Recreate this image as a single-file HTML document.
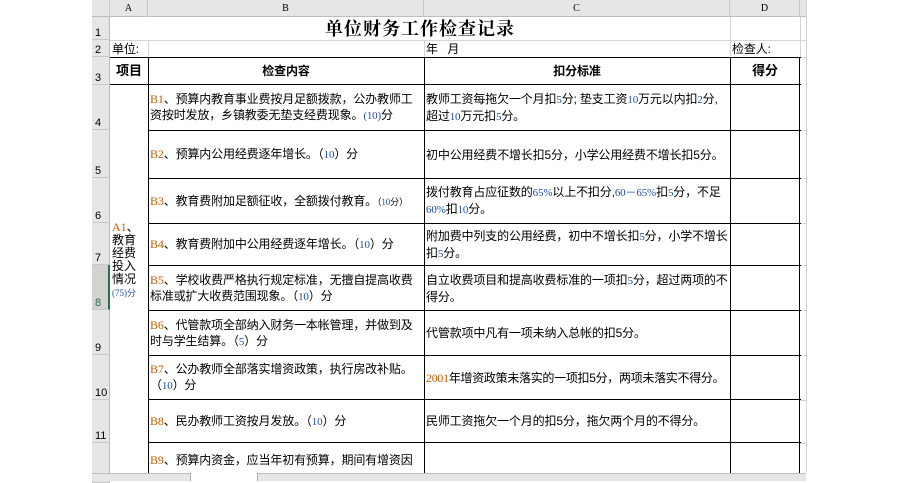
<!DOCTYPE html>
<html><head><meta charset="utf-8"><style>
*{margin:0;padding:0;box-sizing:border-box}
body{width:900px;height:481px;background:#fff;position:relative;overflow:hidden;font-family:"Liberation Serif","Noto Sans CJK SC",serif;font-size:12px;color:#000}
.a{position:absolute}
.ch{position:absolute;top:0;height:17px;line-height:17px;text-align:center;border-right:1px solid #c8c8c8;border-bottom:1px solid #bdbdbd;background:#e6e6e6;font-size:10px;font-family:"Liberation Serif",serif}
.rh{position:absolute;left:92px;width:18px;border-bottom:1px solid #c8c8c8;background:#e6e6e6;font-size:11px;font-family:"Liberation Sans",sans-serif;padding-left:3px;display:flex;align-items:flex-end;border-right:1px solid #bdbdbd}
.c{position:absolute;display:flex;align-items:center;padding:0 2px;line-height:16px;font-family:"Liberation Sans","Noto Sans CJK SC",sans-serif;font-size:12px;letter-spacing:-0.15px}
.b{color:#c06000;font-family:"Liberation Serif",serif}
.n{color:#1f4fa0;font-family:"Liberation Serif",serif;font-size:11px}
.ln{position:absolute;background:#000}
.gl{position:absolute;background:#d4d4d4}
</style></head><body>
<div class="ch" style="left:92px;width:18px"></div>
<div class="ch" style="left:110px;width:38px">A</div>
<div class="ch" style="left:148px;width:276px">B</div>
<div class="ch" style="left:424px;width:306px">C</div>
<div class="ch" style="left:730px;width:70px">D</div>
<div class="ch" style="left:800px;width:6px;border-right:none"></div>
<div class="rh" style="top:17px;height:23px">1</div>
<div class="rh" style="top:40px;height:17px">2</div>
<div class="rh" style="top:57px;height:28px">3</div>
<div class="rh" style="top:85px;height:45px">4</div>
<div class="rh" style="top:130px;height:48px">5</div>
<div class="rh" style="top:178px;height:45px">6</div>
<div class="rh" style="top:223px;height:42px">7</div>
<div class="rh" style="top:265px;height:45px;background:#d2d2d2;border-right:2px solid #217346;color:#217346">8</div>
<div class="rh" style="top:310px;height:45px">9</div>
<div class="rh" style="top:355px;height:45px">10</div>
<div class="rh" style="top:400px;height:43px">11</div>
<div class="rh" style="top:443px;height:40px"></div>
<div class="gl" style="left:110px;top:40px;width:696px;height:1px"></div>
<div class="gl" style="left:110px;top:57px;width:696px;height:1px"></div>
<div class="gl" style="left:730px;top:17px;width:1px;height:40px"></div>
<div class="gl" style="left:800px;top:17px;width:1px;height:40px"></div>
<div class="gl" style="left:424px;top:40px;width:1px;height:17px"></div>
<div class="gl" style="left:148px;top:40px;width:1px;height:17px"></div>
<div class="gl" style="left:800px;top:130px;width:6px;height:1px"></div>
<div class="gl" style="left:800px;top:178px;width:6px;height:1px"></div>
<div class="gl" style="left:800px;top:223px;width:6px;height:1px"></div>
<div class="gl" style="left:800px;top:265px;width:6px;height:1px"></div>
<div class="gl" style="left:800px;top:310px;width:6px;height:1px"></div>
<div class="gl" style="left:800px;top:355px;width:6px;height:1px"></div>
<div class="gl" style="left:800px;top:400px;width:6px;height:1px"></div>
<div class="gl" style="left:800px;top:443px;width:6px;height:1px"></div>
<div class="gl" style="left:806px;top:0;width:1px;height:473px"></div>
<div class="a" style="left:110px;top:17px;width:620px;height:23px;text-align:center;font-family:'Liberation Serif','Noto Serif CJK SC',serif;font-weight:bold;font-size:18px;line-height:24px;letter-spacing:1px">单位财务工作检查记录</div>
<div class="c" style="left:110px;top:40px;height:17px">单位:</div>
<div class="c" style="left:424px;top:40px;height:17px">年&nbsp;&nbsp;&nbsp;月</div>
<div class="c" style="left:730px;top:40px;height:17px">检查人:</div>
<div class="ln" style="left:110px;top:57px;width:691px;height:1px"></div>
<div class="ln" style="left:110px;top:84px;width:691px;height:1px"></div>
<div class="ln" style="left:148px;top:130px;width:653px;height:1px"></div>
<div class="ln" style="left:148px;top:178px;width:653px;height:1px"></div>
<div class="ln" style="left:148px;top:223px;width:653px;height:1px"></div>
<div class="ln" style="left:148px;top:265px;width:653px;height:1px"></div>
<div class="ln" style="left:148px;top:310px;width:653px;height:1px"></div>
<div class="ln" style="left:148px;top:355px;width:653px;height:1px"></div>
<div class="ln" style="left:148px;top:399px;width:653px;height:1px"></div>
<div class="ln" style="left:148px;top:442px;width:653px;height:1px"></div>
<div class="ln" style="left:148px;top:57px;width:1px;height:420px"></div>
<div class="ln" style="left:424px;top:57px;width:1px;height:420px"></div>
<div class="ln" style="left:730px;top:57px;width:1px;height:420px"></div>
<div class="ln" style="left:799px;top:57px;width:1px;height:420px"></div>
<div class="c" style="left:110px;top:58px;width:38px;height:26px;justify-content:center;font-weight:bold;font-size:13px">项目</div>
<div class="c" style="left:148px;top:58px;width:276px;height:26px;justify-content:center;font-weight:bold">检查内容</div>
<div class="c" style="left:424px;top:58px;width:306px;height:26px;justify-content:center;font-weight:bold">扣分标准</div>
<div class="c" style="left:730px;top:58px;width:70px;height:26px;justify-content:center;font-weight:bold;font-size:13px">得分</div>
<div class="a" style="left:112px;top:221px;width:36px;font-family:'Liberation Sans','Noto Sans CJK SC',sans-serif;font-size:12px;line-height:13px"><span class="b">A1</span>、<br>教育<br>经费<br>投入<br>情况<br><span class="n" style="font-size:9px">(75)分</span></div>
<div class="c" style="left:148px;top:85px;width:276px;height:45px"><div><span class="b">B1</span>、预算内教育事业费按月足额拨款，公办教师工资按时发放，乡镇教委无垫支经费现象。<span class="n">(10)</span>分</div></div>
<div class="c" style="left:148px;top:131px;width:276px;height:47px"><div><span class="b">B2</span>、预算内公用经费逐年增长。（<span class="n">10</span>）分</div></div>
<div class="c" style="left:148px;top:179px;width:276px;height:44px"><div><span class="b">B3</span>、教育费附加足额征收，全额拨付教育。<span style="font-size:9px">（<span class="n" style="font-size:9px">10</span>分）</span></div></div>
<div class="c" style="left:148px;top:224px;width:276px;height:41px"><div><span class="b">B4</span>、教育费附加中公用经费逐年增长。（<span class="n">10</span>）分</div></div>
<div class="c" style="left:148px;top:266px;width:276px;height:44px"><div><span class="b">B5</span>、学校收费严格执行规定标准，无擅自提高收费标准或扩大收费范围现象。（<span class="n">10</span>）分</div></div>
<div class="c" style="left:148px;top:311px;width:276px;height:44px"><div><span class="b">B6</span>、代管款项全部纳入财务一本帐管理，并做到及时与学生结算。（<span class="n">5</span>）分</div></div>
<div class="c" style="left:148px;top:356px;width:276px;height:43px"><div><span class="b">B7</span>、公办教师全部落实增资政策，执行房改补贴。（<span class="n">10</span>）分</div></div>
<div class="c" style="left:148px;top:400px;width:276px;height:42px"><div><span class="b">B8</span>、民办教师工资按月发放。（<span class="n">10</span>）分</div></div>
<div class="c" style="left:148px;top:452px;width:276px;height:16px"><div><span class="b">B9</span>、预算内资金，应当年初有预算，期间有增资因</div></div>
<div class="c" style="left:424px;top:85px;width:306px;height:45px"><div>教师工资每拖欠一个月扣<span class="n">5</span>分; 垫支工资<span class="n">10</span>万元以内扣<span class="n">2</span>分,超过<span class="n">10</span>万元扣<span class="n">5</span>分。</div></div>
<div class="c" style="left:424px;top:131px;width:306px;height:47px"><div>初中公用经费不增长扣5分，小学公用经费不增长扣5分。</div></div>
<div class="c" style="left:424px;top:179px;width:306px;height:44px"><div>拨付教育占应征数的<span class="n">65%</span>以上不扣分,<span class="n">60－65%</span>扣<span class="n">5</span>分，不足<span class="n">60%</span>扣<span class="n">10</span>分。</div></div>
<div class="c" style="left:424px;top:224px;width:306px;height:41px"><div>附加费中列支的公用经费，初中不增长扣<span class="n">5</span>分，小学不增长扣<span class="n">5</span>分。</div></div>
<div class="c" style="left:424px;top:266px;width:306px;height:44px"><div>自立收费项目和提高收费标准的一项扣<span class="n">5</span>分，超过两项的不得分。</div></div>
<div class="c" style="left:424px;top:311px;width:306px;height:44px"><div>代管款项中凡有一项未纳入总帐的扣5分。</div></div>
<div class="c" style="left:424px;top:356px;width:306px;height:43px;letter-spacing:-0.3px"><div><span class="b">2001</span>年增资政策未落实的一项扣5分，两项未落实不得分。</div></div>
<div class="c" style="left:424px;top:400px;width:306px;height:42px"><div>民师工资拖欠一个月的扣5分，拖欠两个月的不得分。</div></div>
<div class="a" style="left:92px;top:473px;width:714px;height:8px;background:#e6e6e6;border-top:1px solid #bdbdbd"></div>
<div class="a" style="left:190px;top:473px;width:68px;height:8px;background:#fff;border-left:1px solid #aaa;border-right:1px solid #aaa"></div>
</body></html>
